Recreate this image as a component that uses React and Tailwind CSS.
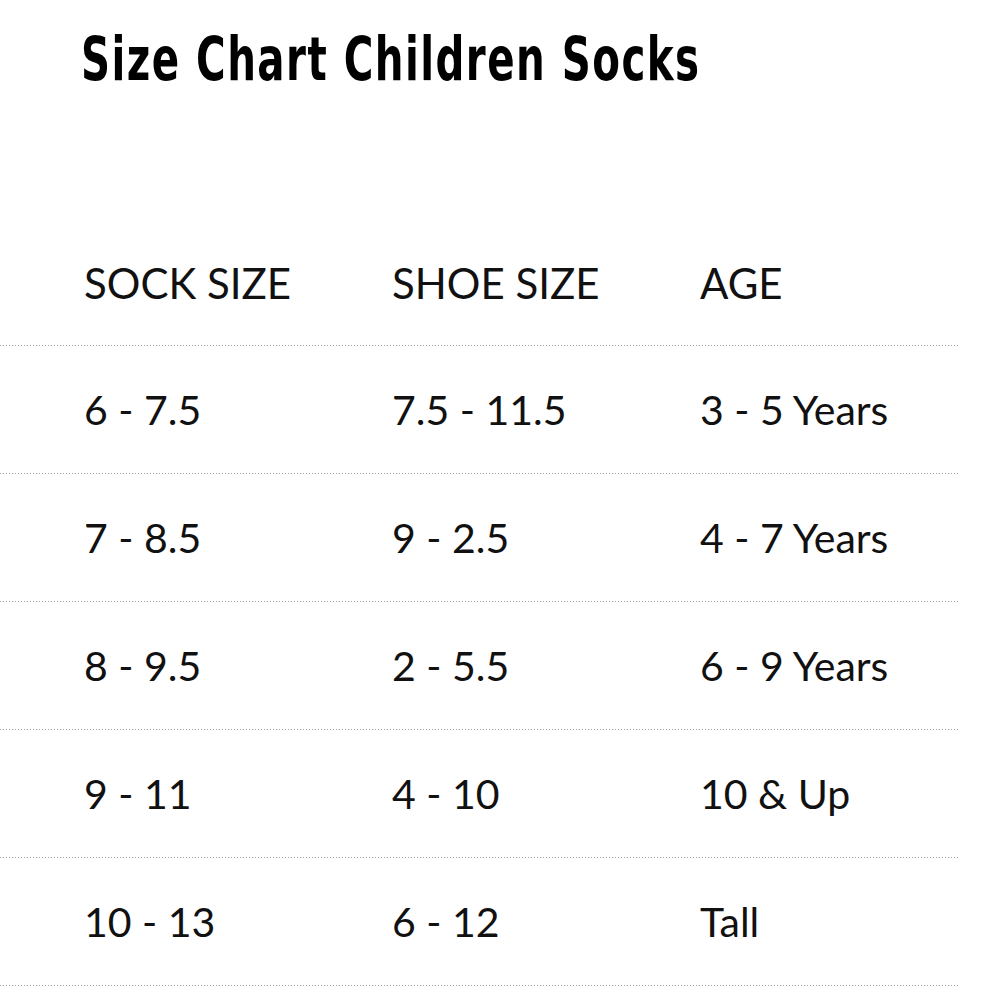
import React from "react";

const rows = [
  ["6 - 7.5", "7.5 - 11.5", "3 - 5 Years"],
  ["7 - 8.5", "9 - 2.5", "4 - 7 Years"],
  ["8 - 9.5", "2 - 5.5", "6 - 9 Years"],
  ["9 - 11", "4 - 10", "10 & Up"],
  ["10 - 13", "6 - 12", "Tall"],
];

function Dots() {
  return (
    <div className="h-px w-[958px] bg-[repeating-linear-gradient(to_right,#9a9a9a_0_1px,transparent_1px_3px)]" />
  );
}

function Row({ cells, header }) {
  return (
    <div
      className={`grid grid-cols-[308px_308px_1fr] items-center pl-[84px] text-[#111] ${
        header ? "h-[126px] pt-[2px] text-[42px]" : "h-[127px] text-[41px]"
      }`}
    >
      {cells.map((c, i) => (
        <span key={i} className="leading-none">
          {c}
        </span>
      ))}
    </div>
  );
}

export default function App() {
  return (
    <div className="w-[1000px] h-[996px] bg-white font-['Lato','Open_Sans',sans-serif] overflow-hidden">
      <div className="pl-[81px] pt-[26px] h-[219px]">
        {/* condensed display face, squeezed to match the narrow headline */}
        <h1 className="inline-block origin-left scale-x-[0.735] whitespace-nowrap font-['DejaVu_Sans',sans-serif] [font-stretch:condensed] font-bold text-[61px] leading-[66px] tracking-[2px] text-black">
          Size Chart Children Socks
        </h1>
      </div>
      <Row cells={["SOCK SIZE", "SHOE SIZE", "AGE"]} header />
      {rows.map((r, i) => (
        <React.Fragment key={i}>
          <Dots />
          <Row cells={r} />
        </React.Fragment>
      ))}
      <Dots />
    </div>
  );
}
